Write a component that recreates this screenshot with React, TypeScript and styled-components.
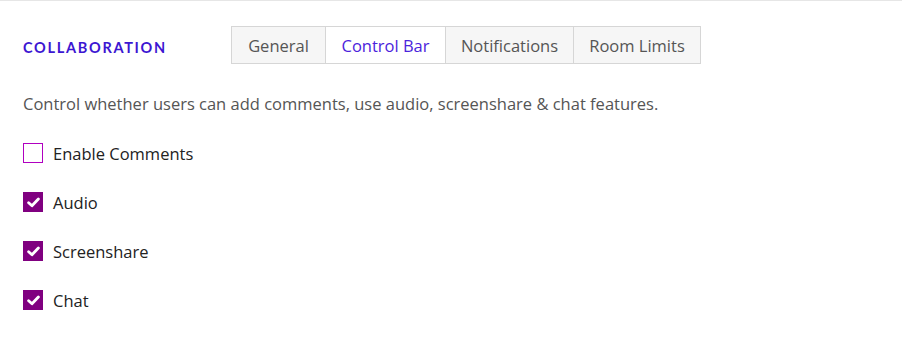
import React, { useState } from "react";
import styled, { createGlobalStyle } from "styled-components";

const Global = createGlobalStyle`
  html, body { margin: 0; padding: 0; background: #fff; }
  body { font-family: "Open Sans", "Noto Sans", sans-serif; }
`;

const Page = styled.div`
  border-top: 1px solid #e6e6e6;
  padding: 25px 23px 0;
`;

const Header = styled.div`
  display: flex;
  align-items: center;
`;

const SectionTitle = styled.div`
  width: 208px;
  flex: none;
  font-family: Lato, sans-serif;
  font-size: 14.5px;
  font-weight: 700;
  letter-spacing: 1.7px;
  color: #3c16d2;
  padding-top: 5px;
`;

const Tabs = styled.div`
  display: flex;
  border: 1px solid #d6d6d6;
  height: 36px;
`;

const Tab = styled.button<{ $active?: boolean; $w: number }>`
  width: ${(p) => p.$w}px;
  box-sizing: border-box;
  border: none;
  border-left: 1px solid #d6d6d6;
  &:first-child { border-left: none; }
  background: ${(p) => (p.$active ? "#fff" : "#f6f6f6")};
  color: ${(p) => (p.$active ? "#4b23dc" : "#555")};
  font-family: "Open Sans", "Noto Sans", sans-serif;
  font-size: 16.5px;
  padding: 0;
  cursor: pointer;
`;

const Description = styled.p`
  margin: 30px 0 0;
  font-size: 16.5px;
  line-height: 20px;
  color: #555;
`;

const List = styled.div`
  display: flex;
  flex-direction: column;
  gap: 29px;
  margin-top: 29px;
`;

const Row = styled.label`
  display: flex;
  align-items: center;
  gap: 10px;
  height: 20px;
  font-size: 16.5px;
  color: #222;
  cursor: pointer;
`;

const Box = styled.span<{ $checked: boolean }>`
  width: 20px;
  height: 20px;
  box-sizing: border-box;
  flex: none;
  display: flex;
  align-items: center;
  justify-content: center;
  background: ${(p) => (p.$checked ? "#800080" : "#fff")};
  border: ${(p) => (p.$checked ? "none" : "1.5px solid #b000c0")};
`;

const tabs = [
  { label: "General", w: 93 },
  { label: "Control Bar", w: 120 },
  { label: "Notifications", w: 128 },
  { label: "Room Limits", w: 127 },
];

export default function App() {
  const [active, setActive] = useState(1);
  const [items, setItems] = useState([
    { label: "Enable Comments", checked: false },
    { label: "Audio", checked: true },
    { label: "Screenshare", checked: true },
    { label: "Chat", checked: true },
  ]);
  return (
    <>
      <Global />
      <Page>
        <Header>
          <SectionTitle>COLLABORATION</SectionTitle>
          <Tabs>
            {tabs.map((t, i) => (
              <Tab key={t.label} $w={t.w} $active={i === active} onClick={() => setActive(i)}>
                {t.label}
              </Tab>
            ))}
          </Tabs>
        </Header>
        <Description>
          Control whether users can add comments, use audio, screenshare &amp; chat features.
        </Description>
        <List>
          {items.map((it, i) => (
            <Row
              key={it.label}
              onClick={() =>
                setItems(items.map((x, j) => (j === i ? { ...x, checked: !x.checked } : x)))
              }
            >
              <Box $checked={it.checked}>
                {it.checked && (
                  <svg width="13" height="11" viewBox="0 0 12 10">
                    <path d="M1.5 5.2 L4.6 8 L10.5 1.8" fill="none" stroke="#fff" strokeWidth="2.6" strokeLinecap="round" strokeLinejoin="round" />
                  </svg>
                )}
              </Box>
              {it.label}
            </Row>
          ))}
        </List>
      </Page>
    </>
  );
}
